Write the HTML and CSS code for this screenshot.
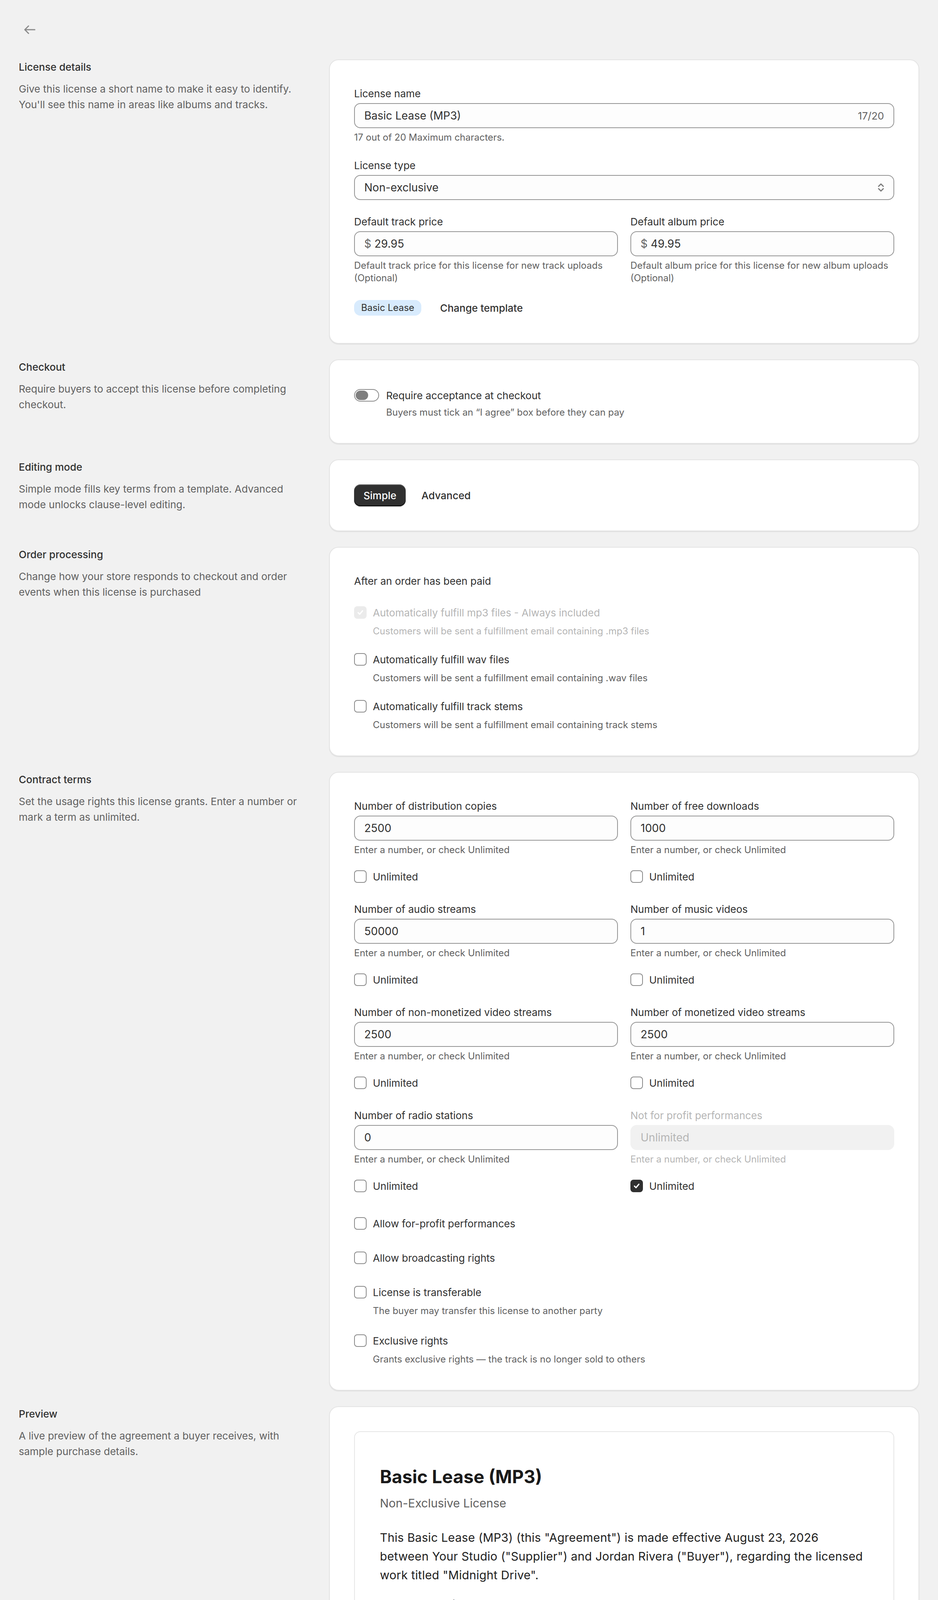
FILE: index.html
```html
<!DOCTYPE html>
<html lang="en">
<head>
<meta charset="utf-8">
<title>Edit license</title>
<link rel="stylesheet" href="styles.css">
</head>
<body>
<div class="page">
  <header class="topbar">
    <button class="back-btn" type="button" aria-label="Back">
      <svg width="16" height="16" viewBox="0 0 16 16" fill="none" stroke="#8a8a8a" stroke-width="1.5" stroke-linecap="round" stroke-linejoin="round"><path d="M14.5 8H1.75M6.5 3.25L1.75 8l4.75 4.75"/></svg>
    </button>
  </header>

  <main class="sections">
    <section class="row">
      <div class="row-info">
        <h2 class="row-title">License details</h2>
        <p class="row-desc">Give this license a short name to make it easy to identify. You'll see this name in areas like albums and tracks.</p>
      </div>
      <div class="card stack">
        <div class="field">
          <label class="field-label">License name</label>
          <div class="control">
            <input class="control-input" type="text" value="Basic Lease (MP3)">
            <span class="counter">17/20</span>
          </div>
          <p class="help">17 out of 20 Maximum characters.</p>
        </div>
        <div class="field">
          <label class="field-label">License type</label>
          <div class="control select">
            <span class="control-text">Non-exclusive</span>
            <svg class="chevrons" width="8" height="12" viewBox="0 0 8 12" fill="none" stroke="#7a7a7a" stroke-width="1.5" stroke-linecap="round" stroke-linejoin="round"><path d="M1 4.5L4 1.5L7 4.5M1 7.5L4 10.5L7 7.5"/></svg>
          </div>
        </div>
        <div class="two-col">
          <div class="field">
            <label class="field-label">Default track price</label>
            <div class="control">
              <span class="prefix">$</span>
              <input class="control-input" type="text" value="29.95">
            </div>
            <p class="help">Default track price for this license for new track uploads (Optional)</p>
          </div>
          <div class="field">
            <label class="field-label">Default album price</label>
            <div class="control">
              <span class="prefix">$</span>
              <input class="control-input" type="text" value="49.95">
            </div>
            <p class="help">Default album price for this license for new album uploads (Optional)</p>
          </div>
        </div>
        <div class="template-row">
          <span class="badge">Basic Lease</span>
          <button class="btn-plain" type="button">Change template</button>
        </div>
      </div>
    </section>

    <section class="row">
      <div class="row-info">
        <h2 class="row-title">Checkout</h2>
        <p class="row-desc">Require buyers to accept this license before completing checkout.</p>
      </div>
      <div class="card">
        <div class="toggle-row">
          <span class="toggle"><span class="toggle-knob"></span></span>
          <span class="toggle-label">Require acceptance at checkout</span>
        </div>
        <p class="toggle-desc">Buyers must tick an “I agree” box before they can pay</p>
      </div>
    </section>

    <section class="row">
      <div class="row-info">
        <h2 class="row-title">Editing mode</h2>
        <p class="row-desc">Simple mode fills key terms from a template. Advanced mode unlocks clause-level editing.</p>
      </div>
      <div class="card">
        <div class="mode-group">
          <button class="btn-primary" type="button">Simple</button>
          <button class="btn-plain" type="button">Advanced</button>
        </div>
      </div>
    </section>

    <section class="row">
      <div class="row-info">
        <h2 class="row-title">Order processing</h2>
        <p class="row-desc">Change how your store responds to checkout and order events when this license is purchased</p>
      </div>
      <div class="card order-list">
        <p class="card-heading">After an order has been paid</p>
        <div class="check-item is-disabled">
          <div class="check">
            <span class="checkbox is-checked-disabled"><svg width="16" height="16" viewBox="0 0 16 16" fill="none" stroke="#fff" stroke-width="1.8" stroke-linecap="round" stroke-linejoin="round"><path d="M4.75 8.25L7 10.5L11.25 5.5"/></svg></span>
            <span class="check-label">Automatically fulfill mp3 files - Always included</span>
          </div>
          <p class="check-desc">Customers will be sent a fulfillment email containing .mp3 files</p>
        </div>
        <div class="check-item">
          <div class="check">
            <span class="checkbox"></span>
            <span class="check-label">Automatically fulfill wav files</span>
          </div>
          <p class="check-desc">Customers will be sent a fulfillment email containing .wav files</p>
        </div>
        <div class="check-item">
          <div class="check">
            <span class="checkbox"></span>
            <span class="check-label">Automatically fulfill track stems</span>
          </div>
          <p class="check-desc">Customers will be sent a fulfillment email containing track stems</p>
        </div>
      </div>
    </section>

    <section class="row">
      <div class="row-info">
        <h2 class="row-title">Contract terms</h2>
        <p class="row-desc">Set the usage rights this license grants. Enter a number or mark a term as unlimited.</p>
      </div>
      <div class="card contract">
        <div class="terms-grid">
          <div class="term">
            <label class="field-label">Number of distribution copies</label>
            <div class="control"><input class="control-input" type="text" value="2500"></div>
            <p class="help">Enter a number, or check Unlimited</p>
            <div class="check term-check"><span class="checkbox"></span><span class="check-label">Unlimited</span></div>
          </div>
          <div class="term">
            <label class="field-label">Number of free downloads</label>
            <div class="control"><input class="control-input" type="text" value="1000"></div>
            <p class="help">Enter a number, or check Unlimited</p>
            <div class="check term-check"><span class="checkbox"></span><span class="check-label">Unlimited</span></div>
          </div>
          <div class="term">
            <label class="field-label">Number of audio streams</label>
            <div class="control"><input class="control-input" type="text" value="50000"></div>
            <p class="help">Enter a number, or check Unlimited</p>
            <div class="check term-check"><span class="checkbox"></span><span class="check-label">Unlimited</span></div>
          </div>
          <div class="term">
            <label class="field-label">Number of music videos</label>
            <div class="control"><input class="control-input" type="text" value="1"></div>
            <p class="help">Enter a number, or check Unlimited</p>
            <div class="check term-check"><span class="checkbox"></span><span class="check-label">Unlimited</span></div>
          </div>
          <div class="term">
            <label class="field-label">Number of non-monetized video streams</label>
            <div class="control"><input class="control-input" type="text" value="2500"></div>
            <p class="help">Enter a number, or check Unlimited</p>
            <div class="check term-check"><span class="checkbox"></span><span class="check-label">Unlimited</span></div>
          </div>
          <div class="term">
            <label class="field-label">Number of monetized video streams</label>
            <div class="control"><input class="control-input" type="text" value="2500"></div>
            <p class="help">Enter a number, or check Unlimited</p>
            <div class="check term-check"><span class="checkbox"></span><span class="check-label">Unlimited</span></div>
          </div>
          <div class="term">
            <label class="field-label">Number of radio stations</label>
            <div class="control"><input class="control-input" type="text" value="0"></div>
            <p class="help">Enter a number, or check Unlimited</p>
            <div class="check term-check"><span class="checkbox"></span><span class="check-label">Unlimited</span></div>
          </div>
          <div class="term is-disabled">
            <label class="field-label">Not for profit performances</label>
            <div class="control control-disabled"><input class="control-input" type="text" placeholder="Unlimited" disabled></div>
            <p class="help">Enter a number, or check Unlimited</p>
            <div class="check term-check"><span class="checkbox is-checked"><svg width="16" height="16" viewBox="0 0 16 16" fill="none" stroke="#fff" stroke-width="1.8" stroke-linecap="round" stroke-linejoin="round"><path d="M4.75 8.25L7 10.5L11.25 5.5"/></svg></span><span class="check-label">Unlimited</span></div>
          </div>
        </div>
        <div class="checklist">
          <div class="check-item">
            <div class="check"><span class="checkbox"></span><span class="check-label">Allow for-profit performances</span></div>
          </div>
          <div class="check-item">
            <div class="check"><span class="checkbox"></span><span class="check-label">Allow broadcasting rights</span></div>
          </div>
          <div class="check-item">
            <div class="check"><span class="checkbox"></span><span class="check-label">License is transferable</span></div>
            <p class="check-desc">The buyer may transfer this license to another party</p>
          </div>
          <div class="check-item">
            <div class="check"><span class="checkbox"></span><span class="check-label">Exclusive rights</span></div>
            <p class="check-desc">Grants exclusive rights — the track is no longer sold to others</p>
          </div>
        </div>
      </div>
    </section>

    <section class="row">
      <div class="row-info">
        <h2 class="row-title">Preview</h2>
        <p class="row-desc">A live preview of the agreement a buyer receives, with sample purchase details.</p>
      </div>
      <div class="card">
        <article class="doc">
          <h1 class="doc-title">Basic Lease (MP3)</h1>
          <p class="doc-sub">Non-Exclusive License</p>
          <p class="doc-intro">This Basic Lease (MP3) (this "Agreement") is made effective August 23, 2026 between Your Studio ("Supplier") and Jordan Rivera ("Buyer"), regarding the licensed work titled "Midnight Drive".</p>
          <div class="doc-meta">
            <p>Buyer contact: jordan@example.com</p>
            <p>Fee: $29.95</p>
          </div>
          <h3 class="doc-h">1. Master Recordings and Compositions</h3>
          <p class="doc-p">This agreement governs the Buyer's use of the licensed work titled "Midnight Drive" (the "Work") supplied by Your Studio ("Supplier") to Jordan Rivera ("Buyer") through Tuneboom.</p>
          <p class="doc-p">Any recording the Buyer creates using the Work — including a recording with a vocal embedded into the Work, or use of the Work as a sample — shall be considered a "Master Recording" and collectively the "Master Recordings". The underlying composition remains the property of the Supplier.</p>
        </article>
      </div>
    </section>
  </main>
</div>
</body>
</html>
```

FILE: styles.css
```css
html {
  zoom: 2;
}

body {
  margin: 0;
  background: #f1f1f1;
  font-family: Inter, "Noto Sans", "Liberation Sans", sans-serif;
  color: #303030;
  -webkit-font-smoothing: antialiased;
}

p, h1, h2, h3 {
  margin: 0;
}

button {
  font: inherit;
  color: inherit;
  cursor: pointer;
}

.page {
  width: 1200px;
  height: 2287px;
  overflow: hidden;
  box-sizing: border-box;
  padding: 24px 24px 0;
}

.topbar {
  height: 28px;
  margin-bottom: 24px;
  display: flex;
}

.back-btn {
  width: 28px;
  height: 28px;
  padding: 0;
  border: 0;
  background: none;
  display: flex;
  align-items: center;
  justify-content: center;
}

.sections {
  display: flex;
  flex-direction: column;
  gap: 20px;
}

.row {
  display: grid;
  grid-template-columns: 373px 1fr;
  column-gap: 24px;
  align-items: start;
}

.row-title {
  font-size: 13px;
  line-height: 20px;
  font-weight: 500;
  color: #303030;
}

.row-desc {
  margin-top: 8px;
  font-size: 13px;
  line-height: 20px;
  color: #616161;
}

.card {
  background: #fff;
  border: 1px solid #e4e4e4;
  border-radius: 12px;
  padding: 31px;
  box-shadow: 0 1px 1px rgba(0, 0, 0, 0.07);
}

.stack {
  display: flex;
  flex-direction: column;
  gap: 16px;
}

.field {
  display: flex;
  flex-direction: column;
}

.field-label {
  display: block;
  font-size: 13px;
  line-height: 24px;
  color: #303030;
}

.control {
  height: 32px;
  box-sizing: border-box;
  border: 1px solid #959595;
  border-radius: 8px;
  background: #fdfdfd;
  display: flex;
  align-items: center;
  padding: 0 12px;
  gap: 4px;
}

.control-input {
  flex: 1;
  min-width: 0;
  border: 0;
  outline: 0;
  padding: 0;
  background: transparent;
  font: inherit;
  font-size: 14px;
  color: #303030;
}

.control-input::placeholder {
  color: #b5b5b5;
}

.control-text {
  flex: 1;
  font-size: 14px;
  color: #303030;
}

.counter {
  font-size: 13px;
  color: #616161;
}

.prefix {
  font-size: 14px;
  color: #616161;
}

.chevrons {
  flex: none;
}

.help {
  margin-top: 4px;
  font-size: 12px;
  line-height: 16px;
  color: #616161;
}

.two-col {
  display: grid;
  grid-template-columns: 1fr 1fr;
  column-gap: 16px;
}

.template-row {
  height: 28px;
  display: flex;
  align-items: center;
  gap: 12px;
}

.badge {
  height: 20px;
  padding: 0 9px;
  border-radius: 8px;
  background: #d8ebfd;
  color: #303030;
  font-size: 12px;
  line-height: 20px;
}

.btn-plain {
  height: 28px;
  padding: 0 12px;
  border: 0;
  border-radius: 8px;
  background: none;
  font-size: 13px;
  font-weight: 500;
  color: #303030;
}

.btn-primary {
  height: 28px;
  padding: 0 12px;
  border: 0;
  border-radius: 8px;
  background: #303030;
  color: #fff;
  font-size: 13px;
  font-weight: 500;
  box-shadow: inset 0 -1px 0 #000, inset 0 1px 0 rgba(255, 255, 255, 0.22), 0 1px 1px rgba(0, 0, 0, 0.2);
}

.mode-group {
  display: flex;
  gap: 8px;
}

/* toggle */
.toggle-row {
  height: 28px;
  display: flex;
  align-items: center;
  gap: 9px;
}

.toggle {
  width: 32px;
  height: 16px;
  box-sizing: border-box;
  border: 1px solid #8a8a8a;
  border-radius: 8px;
  background: #fff;
  position: relative;
  flex: none;
}

.toggle-knob {
  position: absolute;
  left: 1px;
  top: 1px;
  width: 16px;
  height: 12px;
  border-radius: 6px;
  background: #7e7e7e;
}

.toggle-label {
  font-size: 13px;
  color: #303030;
}

.toggle-desc {
  margin-left: 41px;
  font-size: 12px;
  line-height: 16px;
  color: #616161;
}

/* checkboxes */
.check {
  height: 28px;
  display: flex;
  align-items: center;
  gap: 8px;
}

.checkbox {
  width: 16px;
  height: 16px;
  box-sizing: border-box;
  border: 1px solid #8a8a8a;
  border-radius: 4px;
  background: #fff;
  flex: none;
  display: flex;
  align-items: center;
  justify-content: center;
}

.checkbox svg {
  display: block;
}

.checkbox.is-checked {
  background: #303030;
  border-color: #303030;
}

.checkbox.is-checked-disabled {
  background: #ebebeb;
  border-color: #ebebeb;
}

.check-label {
  font-size: 13px;
  color: #303030;
}

.check-desc {
  margin: 2px 0 0 24px;
  font-size: 12px;
  line-height: 16px;
  color: #616161;
}

.check-item.is-disabled .check-label,
.check-item.is-disabled .check-desc {
  color: #b5b5b5;
}

.order-list {
  display: flex;
  flex-direction: column;
  gap: 14px;
}

.card-heading {
  font-size: 13px;
  line-height: 24px;
  color: #303030;
}

/* contract terms */
.contract {
  display: flex;
  flex-direction: column;
  gap: 20px;
}

.terms-grid {
  display: grid;
  grid-template-columns: 1fr 1fr;
  gap: 16px;
}

.term {
  display: flex;
  flex-direction: column;
}

.term-check {
  margin-top: 12px;
}

.term.is-disabled .field-label,
.term.is-disabled .help {
  color: #b5b5b5;
}

.control-disabled {
  background: #f1f1f1;
  border-color: #f1f1f1;
}

.checklist {
  display: flex;
  flex-direction: column;
  gap: 16px;
}

/* preview document */
.doc {
  border: 1px solid #e6e6e6;
  border-radius: 8px;
  padding: 41px 35px 41px 32px;
  color: #202020;
}

.doc-title {
  font-size: 23px;
  line-height: 32px;
  font-weight: 700;
  color: #1a1a1a;
  margin-bottom: 6px;
}

.doc-sub {
  font-size: 15px;
  line-height: 24px;
  color: #616161;
}

.doc-intro {
  margin-top: 20px;
  font-size: 15px;
  line-height: 24px;
  letter-spacing: 0.15px;
}

.doc-meta {
  margin-top: 13px;
  font-size: 13px;
  line-height: 24px;
  color: #616161;
}

.doc-h {
  margin-top: 22px;
  font-size: 15px;
  line-height: 24px;
  font-weight: 600;
  color: #1a1a1a;
}

.doc-p {
  margin-top: 6px;
  font-size: 15px;
  line-height: 24px;
  letter-spacing: 0.15px;
}

.doc-p + .doc-p {
  margin-top: 8px;
}
```
